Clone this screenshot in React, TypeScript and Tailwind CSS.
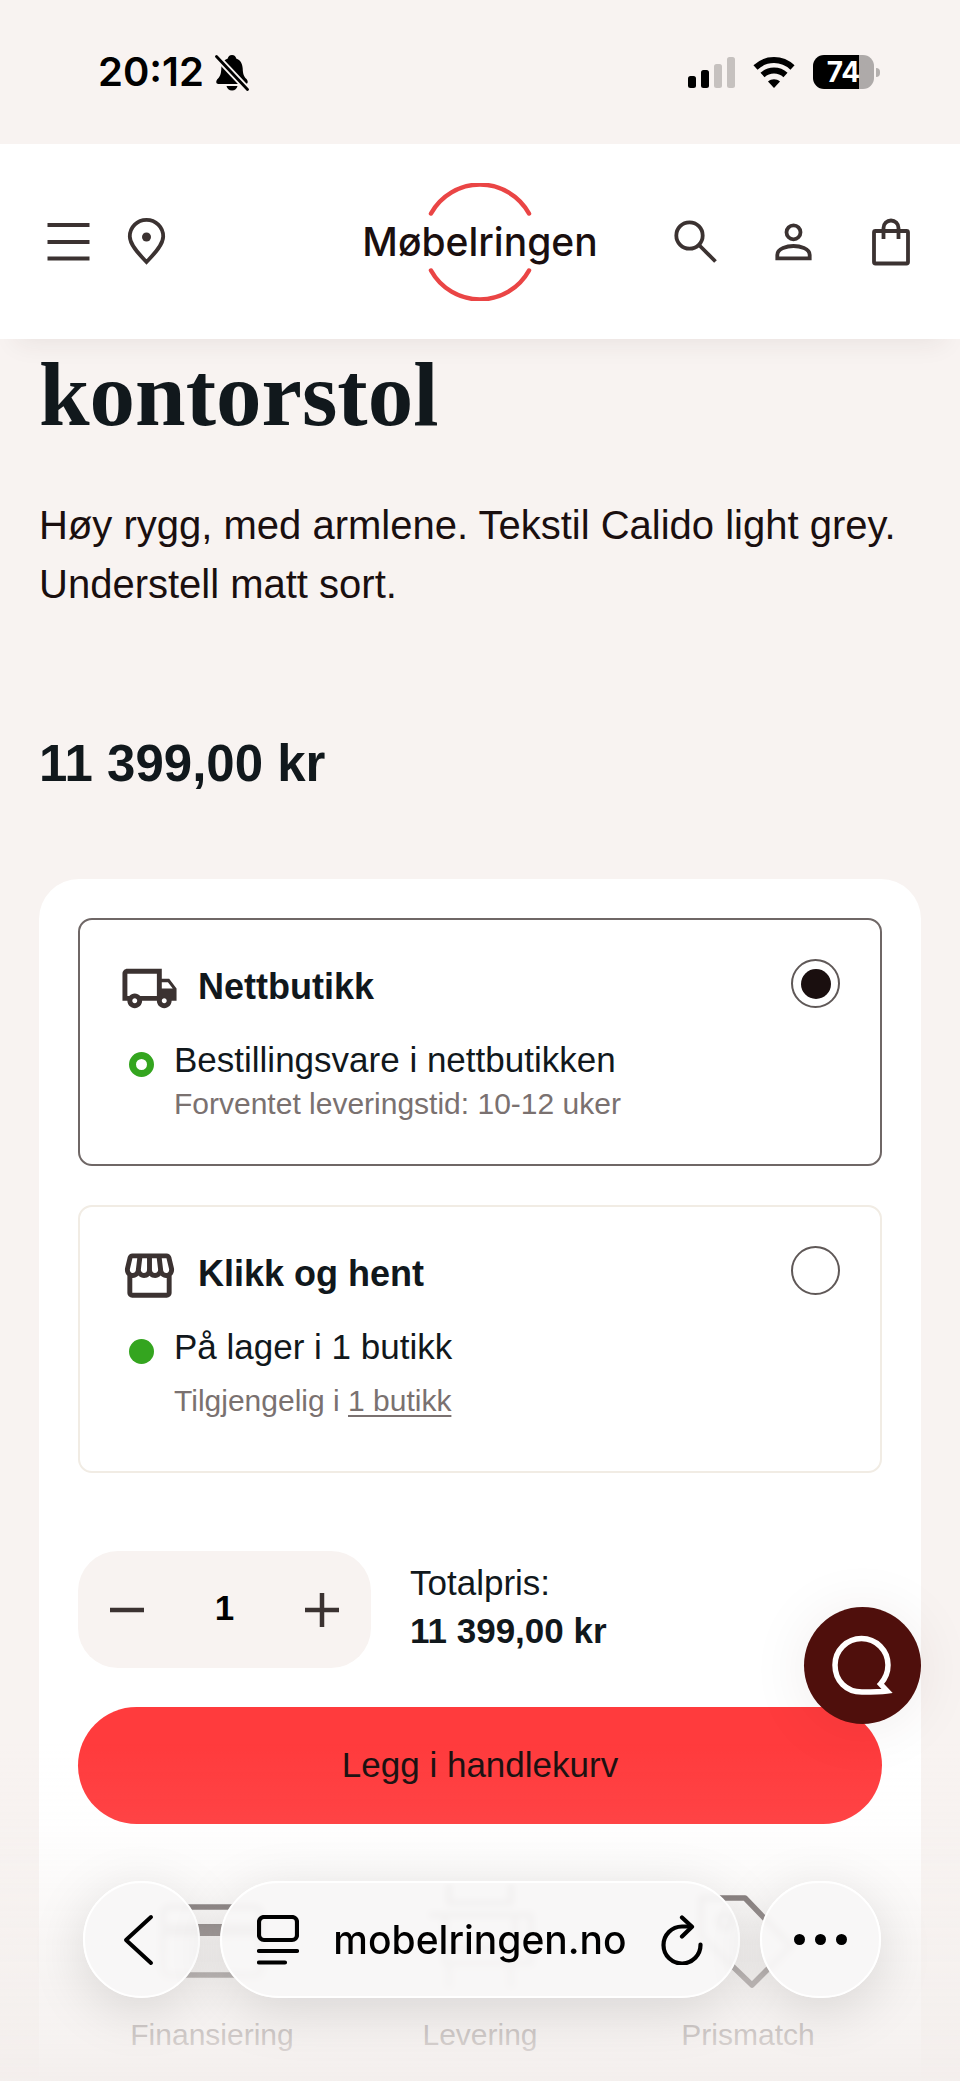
import { useState } from 'react';
import { MdOutlineLocalShipping, MdOutlineStorefront } from 'react-icons/md';

const UNIT_PRICE = 11399;

// 11399 -> "11 399,00 kr"
const formatPrice = (value: number) => {
  const whole = Math.floor(value).toString().replace(/\B(?=(\d{3})+$)/g, '\u00a0');
  return `${whole},00 kr`;
};

const StatusBar = () => (
  <div className="flex h-36 items-center justify-between pl-[98px] pr-[80px] font-['Inter',sans-serif] text-black">
    <div className="flex items-center gap-2.5">
      <span className="text-[40px] leading-[48px] font-semibold">20:12</span>
      <svg width="36" height="37" viewBox="0 0 36 37" aria-label="Lydløs">
        <path d="M18 1c-2.400 0-4 1.600-4.200 3.600C9.500 6 7.500 10 7.300 14.500c-.2 6-1.300 8-3.500 10.300C1.600 27 1.800 30 4.500 30h27c2.700 0 2.900-3 .7-5.200-2.200-2.300-3.300-4.300-3.500-10.300C28.500 10 26.500 6 22.200 4.600 22 2.600 20.400 1 18 1z" />
        <path d="M12.500 32h11c-.5 2.500-2.600 4.500-5.500 4.500s-5-2-5.500-4.500z" />
        <path d="M2.500 2.500l31 33" stroke="#f8f3f1" strokeWidth="6.500" />
        <path d="M2.500 2.500l31 33" stroke="#000" strokeWidth="2.800" strokeLinecap="round" />
      </svg>
    </div>
    <div className="flex items-center gap-[18px]">
      <svg width="47" height="31" viewBox="0 0 47 31" aria-label="Mobilsignal">
        <rect x="0" y="19" width="8" height="12" rx="2.500" />
        <rect x="13" y="13" width="8" height="18" rx="2.500" />
        <rect x="26" y="7" width="8" height="24" rx="2.500" fill="#c6c1bf" />
        <rect x="39" y="0" width="8" height="31" rx="2.500" fill="#c6c1bf" />
      </svg>
      <svg width="42" height="31" viewBox="0 0 42 31" aria-label="Wi-Fi">
        <path d="M2.500 10.500C13 .5 29 .5 39.500 10.500" fill="none" stroke="#000" strokeWidth="6" />
        <path d="M9.500 18c6.500-6 16.500-6 23 0" fill="none" stroke="#000" strokeWidth="6" />
        <path d="M15 24.500c3.500-3 8.500-3 12 0L21 31z" />
      </svg>
      <div className="flex items-center gap-0.5">
        <div className="flex h-[34px] w-[61px] items-center justify-center rounded-[11px] bg-linear-to-r from-black from-75% to-[#aeaaa9] to-75% text-[28px] leading-none font-bold text-white">
          74
        </div>
        <span className="h-[9px] w-1 rounded-r-full bg-[#b4b0ae]" />
      </div>
    </div>
  </div>
);

const Logo = () => (
  <a href="#" className="grid place-items-center">
    <svg width="116" height="118" viewBox="0 0 116 118" className="col-start-1 row-start-1" fill="none" stroke="#ea4545" strokeWidth="4.500" strokeLinecap="round">
      <path d="M9 30.500a56 56 0 0 1 98 0" />
      <path d="M9 87.500a56 56 0 0 0 98 0" />
    </svg>
    <span className="col-start-1 row-start-1 font-['Inter',sans-serif] text-[39px] leading-[48px] font-medium text-[#1a0f0f]">
      Møbelringen
    </span>
  </a>
);

const HeaderIcon = ({ label, children }: { label: string; children: React.ReactNode }) => (
  <button type="button" aria-label={label}>
    <svg width="59" height="59" viewBox="0 0 59 59" fill="none" stroke="#3b3231" strokeWidth="3.800">
      {children}
    </svg>
  </button>
);

const Header = () => (
  <header className="sticky top-0 z-10 grid h-[195px] grid-cols-[1fr_auto_1fr] items-center bg-white px-[39px] shadow-[0_20px_24px_-16px_rgba(60,40,40,0.08)]">
    <div className="flex gap-[19px]">
      <HeaderIcon label="Meny">
        <path d="M8.500 13h42M8.500 30h42M8.500 46.500h42" />
      </HeaderIcon>
      <HeaderIcon label="Finn butikk">
        <path d="M29.500 50C24 44 12.800 33.500 12.800 24.500a16.700 16.700 0 0 1 33.400 0c0 9-11.200 19.500-16.700 25.500z" />
        <circle cx="29.500" cy="25" r="4.500" fill="#3b3231" stroke="none" />
      </HeaderIcon>
    </div>
    <Logo />
    <div className="flex justify-end gap-[39px]">
      <HeaderIcon label="Søk">
        <circle cx="23.500" cy="23.500" r="13.200" />
        <path d="M33 33l16.500 16.500" />
      </HeaderIcon>
      <HeaderIcon label="Min side">
        <circle cx="29.500" cy="20.300" r="7" />
        <path d="M13.300 46.300V43c0-6.500 10-9 16.200-9s16.200 2.500 16.200 9v3.300z" />
      </HeaderIcon>
      <HeaderIcon label="Handlekurv">
        <rect x="12" y="19" width="34" height="32.500" rx="1.500" />
        <path d="M21.500 27V16a7.500 7.500 0 0 1 15 0v11" />
      </HeaderIcon>
    </div>
  </header>
);

type OptionProps = {
  id: string;
  title: string;
  icon: React.ReactNode;
  stock: string;
  dotClass: string;
  checked: boolean;
  onSelect: () => void;
  children: React.ReactNode;
};

const DeliveryOption = ({ id, title, icon, stock, dotClass, checked, onSelect, children }: OptionProps) => (
  <div className={`rounded-[14px] border-2 px-10 pt-[39px] pb-[38px] ${checked ? 'border-[#6f6766]' : 'border-[#f1ece4]'}`}>
    <div className="flex items-start text-[#3b3231]">
      {icon}
      <label htmlFor={id} className="ml-[19px] flex-1 text-4xl leading-[56px] font-bold text-[#11181c]">
        {title}
      </label>
      <input
        id={id}
        type="radio"
        name="delivery"
        checked={checked}
        onChange={onSelect}
        className="grid size-[49px] appearance-none place-content-center rounded-full border-2 border-[#5f5857] before:size-[30px] before:rounded-full checked:before:bg-[#1a0f0f]"
      />
    </div>
    <div className="mt-5 flex items-start gap-5 pl-[9px]">
      <span className={`mt-[14px] size-[25px] shrink-0 rounded-full border-[#34a51f] ${dotClass}`} />
      <div>
        <p className="text-[35px] leading-[44px] text-[#11181c]">{stock}</p>
        {children}
      </div>
    </div>
  </div>
);

const Perk = ({ label, children }: { label: string; children: React.ReactNode }) => (
  <div className="flex flex-col items-center gap-5">
    <svg width="110" height="110" viewBox="0 0 110 110" fill="none" stroke="#4a4040" strokeWidth="5.500" strokeLinejoin="round">
      {children}
    </svg>
    <span className="text-[30px] leading-[40px] text-[#6f6766]">{label}</span>
  </div>
);

const BrowserBar = () => (
  <nav className="fixed inset-x-0 bottom-[83px] z-20 flex gap-5 pr-[79px] pl-[83px] font-['Inter',sans-serif] text-black">
    <button
      type="button"
      aria-label="Tilbake"
      className="flex h-[117px] w-[117px] items-center justify-center rounded-full border-2 border-white bg-[#f8f6f6]/94 shadow-[0_12px_56px_rgba(0,0,0,0.13)] backdrop-blur-[3px]"
    >
      <svg width="38" height="54" viewBox="0 0 38 54" fill="none" stroke="currentColor" strokeWidth="4" strokeLinecap="round" strokeLinejoin="round">
        <path d="M28 4L3 27l25 23" />
      </svg>
    </button>
    <div className="flex h-[117px] flex-1 items-center justify-between rounded-full border-2 border-white bg-[#f8f6f6]/94 px-[35px] shadow-[0_12px_56px_rgba(0,0,0,0.13)] backdrop-blur-[3px]">
      <button type="button" aria-label="Sidemeny">
        <svg width="42" height="50" viewBox="0 0 42 50" fill="none" stroke="currentColor" strokeWidth="4.200" strokeLinecap="round">
          <rect x="2" y="2" width="38" height="23" rx="5" />
          <path d="M2 36h38M2 47.500h26" />
        </svg>
      </button>
      <button type="button" className="text-[39px] leading-[48px] font-medium">
        mobelringen.no
      </button>
      <button type="button" aria-label="Last inn på nytt">
        <svg width="42" height="50" viewBox="0 0 42 50" fill="none" stroke="currentColor" strokeWidth="4.200" strokeLinecap="round" strokeLinejoin="round">
          <path d="M39.500 29.500A18.500 18.500 0 1 1 21 11.500h9" />
          <path d="M21 2.500l10 9.300-10 9.700" />
        </svg>
      </button>
    </div>
    <button
      type="button"
      aria-label="Mer"
      className="flex h-[117px] w-[121px] items-center justify-center gap-[10px] rounded-full border-2 border-white bg-[#f8f6f6]/94 shadow-[0_12px_56px_rgba(0,0,0,0.13)] backdrop-blur-[3px]"
    >
      <span className="size-[11px] rounded-full bg-black" />
      <span className="size-[11px] rounded-full bg-black" />
      <span className="size-[11px] rounded-full bg-black" />
    </button>
  </nav>
);

export default function App() {
  const [delivery, setDelivery] = useState('web');
  const [quantity, setQuantity] = useState(1);

  return (
    <div className="min-h-screen bg-[#f8f3f1] font-['Liberation_Sans',Arial,sans-serif]">
      <StatusBar />
      <Header />

      <main className="px-[39px] pt-[11px]">
        <h1 className="font-['Liberation_Serif',serif] text-[91px] leading-[90px] font-bold text-[#11181c]">kontorstol</h1>
        <p className="mt-14 text-[40px] leading-[59px] text-[#1a0f0f]">
          Høy rygg, med armlene. Tekstil Calido light grey. Understell matt sort.
        </p>
        <p className="mt-[120px] text-[51px] leading-[60px] font-bold text-[#11181c]">{formatPrice(UNIT_PRICE)}</p>

        <section className="mt-[85px] rounded-t-[40px] bg-white px-[39px] pt-[39px] pb-6">
          <div className="flex flex-col gap-[39px]">
            <DeliveryOption
              id="delivery-web"
              title="Nettbutikk"
              icon={<MdOutlineLocalShipping size={59} />}
              stock="Bestillingsvare i nettbutikken"
              dotClass="border-[7px]"
              checked={delivery === 'web'}
              onSelect={() => setDelivery('web')}
            >
              <p className="text-[30px] leading-[44px] text-[#7a7170]">Forventet leveringstid: 10-12 uker</p>
            </DeliveryOption>
            <DeliveryOption
              id="delivery-store"
              title="Klikk og hent"
              icon={<MdOutlineStorefront size={59} />}
              stock="På lager i 1 butikk"
              dotClass="bg-[#34a51f]"
              checked={delivery === 'store'}
              onSelect={() => setDelivery('store')}
            >
              <p className="py-2.5 text-[30px] leading-[44px] text-[#7a7170]">
                Tilgjengelig i{' '}
                <a href="#" className="underline decoration-2 underline-offset-4">
                  1 butikk
                </a>
              </p>
            </DeliveryOption>
          </div>

          <div className="mt-[78px] flex items-center gap-[39px]">
            <div className="flex h-[117px] w-[293px] items-center justify-between rounded-[40px] bg-[#f8f3f1] px-[30px]">
              <button type="button" aria-label="Færre" onClick={() => setQuantity(Math.max(1, quantity - 1))}>
                <svg width="38" height="38" viewBox="0 0 38 38" stroke="#3b3231" strokeWidth="4.500">
                  <path d="M2 19h34" />
                </svg>
              </button>
              <input
                aria-label="Antall"
                type="text"
                inputMode="numeric"
                value={quantity}
                onChange={(e) => setQuantity(Number(e.target.value.replace(/[^0-9]/g, '')) || 1)}
                className="w-20 bg-transparent pb-1 text-center text-[35px] leading-[48px] font-bold text-black outline-none"
              />
              <button type="button" aria-label="Flere" onClick={() => setQuantity(quantity + 1)}>
                <svg width="38" height="38" viewBox="0 0 38 38" stroke="#3b3231" strokeWidth="4.500">
                  <path d="M2 19h34M19 2v34" />
                </svg>
              </button>
            </div>
            <div className="pb-1.5 text-[35px] leading-[48px] text-[#11181c]">
              <p>Totalpris:</p>
              <p className="font-bold">{formatPrice(UNIT_PRICE * quantity)}</p>
            </div>
          </div>

          <button type="button" className="mt-[39px] h-[117px] w-full rounded-full bg-[#ff3b3d] text-[35px] text-[#1a0f0f]">
            Legg i handlekurv
          </button>

          <div className="mt-[61px] grid grid-cols-3">
            <Perk label="Finansiering">
              <rect x="6" y="22" width="98" height="68" rx="6" />
              <path d="M6 45h98" strokeWidth="12" />
            </Perk>
            <Perk label="Levering">
              <path d="M24 -4v22h62V-4M20 30h70v34H20zM4 30h16v48h86V30H90M24 78v24M86 78v24" />
            </Perk>
            <Perk label="Prismatch">
              <path d="M8 13h44l46 48-39 39L8 51z" />
              <circle cx="32" cy="36" r="7" />
            </Perk>
          </div>
        </section>
      </main>

      {/* fade behind the browser controls */}
      <div className="pointer-events-none fixed inset-x-0 bottom-0 z-10 h-[340px] bg-[linear-gradient(to_bottom,#f4f0ee00_0%,#f4f0ee0c_24%,#f4f0ee60_45%,#f4f0eeb0_70%,#f3eeecb8_86%,#f3eeecf2_100%)]" />

      <button
        type="button"
        aria-label="Åpne chat"
        className="fixed right-[39px] bottom-[357px] z-20 flex size-[117px] items-center justify-center rounded-full bg-[#4f0f0c] shadow-[0_4px_60px_rgba(60,20,20,0.08)]"
      >
        <svg width="61" height="61" viewBox="0 0 61 61" fill="none" stroke="#fff" strokeWidth="5.500">
          <path d="M31 57C14 57.500 3 45.500 3 30A26.500 26.500 0 0 1 56 30c0 8-3 14-7.500 19l6.500 7c-8 1-16 1-24 1z" />
        </svg>
      </button>

      <BrowserBar />
    </div>
  );
}
